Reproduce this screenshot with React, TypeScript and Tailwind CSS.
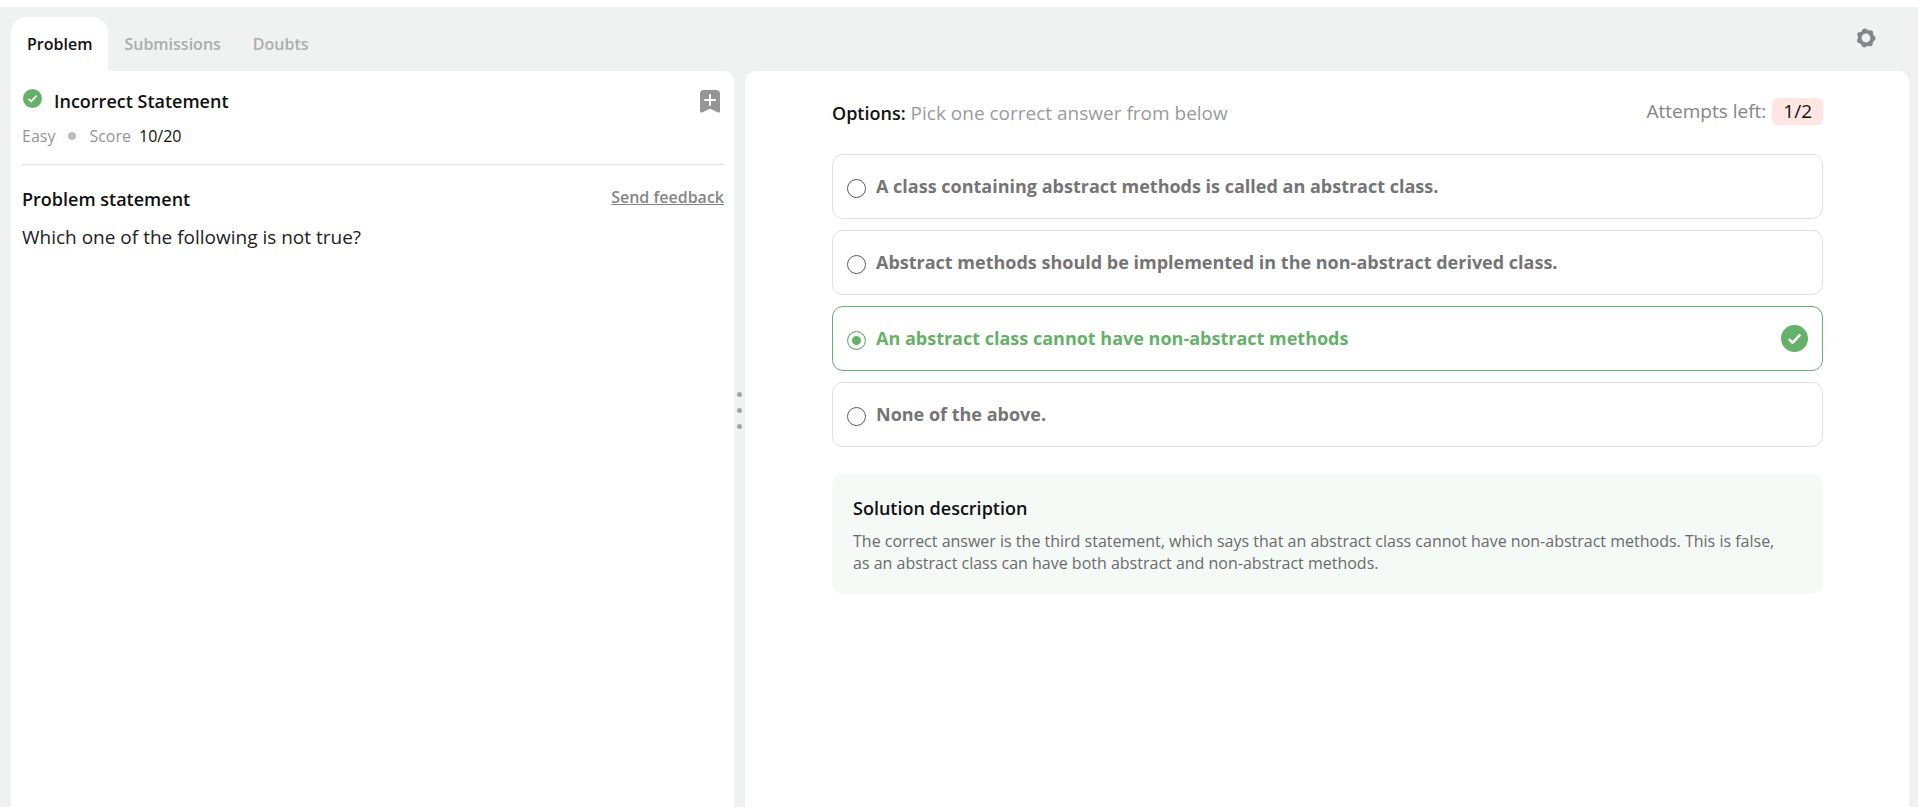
import { useState } from "react";

const options = [
  "A class containing abstract methods is called an abstract class.",
  "Abstract methods should be implemented in the non-abstract derived class.",
  "An abstract class cannot have non-abstract methods",
  "None of the above.",
];
const correct = 2;

const tabs = ["Problem", "Submissions", "Doubts"];

function CheckBadge({ className }: { className: string }) {
  return (
    <svg viewBox="0 0 27 27" className={className} aria-hidden="true">
      <circle cx="13.5" cy="13.5" r="13.5" fill="#66b16a" />
      <path
        d="M8.700 14.900l3 2.800 6.800-7.400"
        fill="none"
        stroke="#fff"
        strokeWidth="2.6"
        strokeLinecap="round"
        strokeLinejoin="round"
      />
    </svg>
  );
}

function GearIcon() {
  const angles = [-100, -49, 3, 54, 105, 157, 208];
  return (
    <svg viewBox="-10 -10 20 20" className="size-5" aria-hidden="true">
      <circle r="6.2" fill="none" stroke="#848687" strokeWidth="3.6" />
      {angles.map((a) => (
        <circle
          key={a}
          cx={6.7 * Math.cos((a * Math.PI) / 180)}
          cy={6.7 * Math.sin((a * Math.PI) / 180)}
          r="2.8"
          fill="#848687"
        />
      ))}
      <circle r="4.4" fill="#f0f2f1" />
    </svg>
  );
}

function BookmarkIcon() {
  return (
    <svg viewBox="0 0 20 23" className="h-[23px] w-5" aria-hidden="true">
      <path
        d="M4 0h12a4 4 0 0 1 4 4v17.200c0 1-.9 1.600-1.800 1.200L10 18.800l-8.200 3.600C.9 22.800 0 22.200 0 21.200V4a4 4 0 0 1 4-4z"
        fill="#959595"
      />
      <path d="M10 5v10M5 10h10" stroke="#fff" strokeWidth="2" strokeLinecap="round" />
    </svg>
  );
}

export default function App() {
  const [tab, setTab] = useState("Problem");
  const [picked, setPicked] = useState(correct);

  return (
    <div className="min-h-screen bg-white pt-[7px] font-['Open_Sans',sans-serif] text-[#111]">
      <div className="flex min-h-[calc(100vh-7px)] flex-col bg-[#f0f2f1] pl-[11px] pr-[9px]">
        <header className="flex h-16 items-start justify-between pt-[10px]">
          <nav className="flex">
            {tabs.map((t) => (
              <button
                key={t}
                type="button"
                onClick={() => setTab(t)}
                className={
                  t === tab
                    ? "h-[54px] rounded-t-2xl bg-white px-4 text-[16px] font-semibold"
                    : "h-[54px] px-4 text-[16px] font-semibold text-[#acadad]"
                }
              >
                {t}
              </button>
            ))}
          </nav>
          <button type="button" aria-label="Settings" className="mr-[33px] mt-[11px]">
            <GearIcon />
          </button>
        </header>

        <main className="flex grow">
          <section className="flex w-[723px] shrink-0 flex-col rounded-tr-[11px] bg-white pl-[11px] pr-[10px]">
            <div className="flex items-start justify-between border-b border-[#e0e0e0] pb-4 pt-4">
              <div>
                <div className="flex items-start">
                  <CheckBadge className="ml-px mt-0.5 size-[19px]" />
                  <h1 className="ml-3 text-[18px] font-semibold leading-7">Incorrect Statement</h1>
                </div>
                <p className="mt-[9px] flex items-center text-[16px] leading-6 text-[#959595]">
                  Easy
                  <span className="mx-[13px] size-2 rounded-full bg-[#bdbdbd]" />
                  Score <span className="ml-2 font-medium text-[#111]">10/20</span>
                </p>
              </div>
              <button type="button" aria-label="Bookmark" className="mr-1 mt-[3px]">
                <BookmarkIcon />
              </button>
            </div>
            <div className="mt-5 flex items-start justify-between">
              <h2 className="text-[18px] font-semibold leading-7">Problem statement</h2>
              <a href="#feedback" className="text-[16px] font-semibold leading-6 text-[#858585] underline">
                Send feedback
              </a>
            </div>
            <p className="mt-2.5 text-[19px] leading-7 text-[#222]">Which one of the following is not true?</p>
          </section>

          <div className="flex w-[11px] shrink-0 flex-col items-center justify-center gap-[11px] pb-[57px]">
            <span className="size-[5px] rounded-full bg-[#a3a4a6]" />
            <span className="size-[5px] rounded-full bg-[#a3a4a6]" />
            <span className="size-[5px] rounded-full bg-[#a3a4a6]" />
          </div>

          <section className="min-w-0 grow rounded-t-[11px] bg-white pl-[87px] pr-[86px] pt-[27px]">
            <div className="flex items-start justify-between text-[19px] leading-[27px]">
              <h2 className="pt-0.5 text-[#9b9b9b]">
                <span className="text-[18px] font-semibold text-[#111]">Options:</span> Pick one correct answer
                from below
              </h2>
              <p className="flex gap-1.5 text-[#858585]">
                Attempts left:
                <span className="rounded-[5px] bg-[#ffe6e3] px-[11px] text-[#111]">1/2</span>
              </p>
            </div>

            <div className="mt-[27px] flex flex-col gap-[11px]">
              {options.map((text, i) => (
                <label
                  key={text}
                  className={
                    i === picked
                      ? "flex h-[65px] items-center rounded-[11px] border border-[#66b16a] px-3.5 text-[#66b16a]"
                      : "flex h-[65px] items-center rounded-[11px] border border-[#e0e0e0] px-3.5 text-[#757575]"
                  }
                >
                  <input
                    type="radio"
                    name="answer"
                    checked={i === picked}
                    onChange={() => setPicked(i)}
                    className="mt-[3px] size-[19px] shrink-0 appearance-none rounded-full border border-[#5c5c5c] checked:border-[#66b16a] checked:bg-[#66b16a] checked:shadow-[inset_0_0_0_4px_white]"
                  />
                  <span className="ml-2.5 grow pb-0.5 text-[18px] font-bold leading-7">{text}</span>
                  {i === correct && i === picked && <CheckBadge className="size-[27px]" />}
                </label>
              ))}
            </div>

            <div className="mt-[27px] rounded-[11px] bg-[#f5faf7] py-5 pl-[21px] pr-8">
              <h3 className="text-[18px] font-semibold leading-7">Solution description</h3>
              <p className="mt-2 text-[16px] leading-[22px] text-[#6b6b6b]">
                The correct answer is the third statement, which says that an abstract class cannot have
                non-abstract methods. This is false, as an abstract class can have both abstract and
                non-abstract methods.
              </p>
            </div>
          </section>
        </main>
      </div>
    </div>
  );
}
